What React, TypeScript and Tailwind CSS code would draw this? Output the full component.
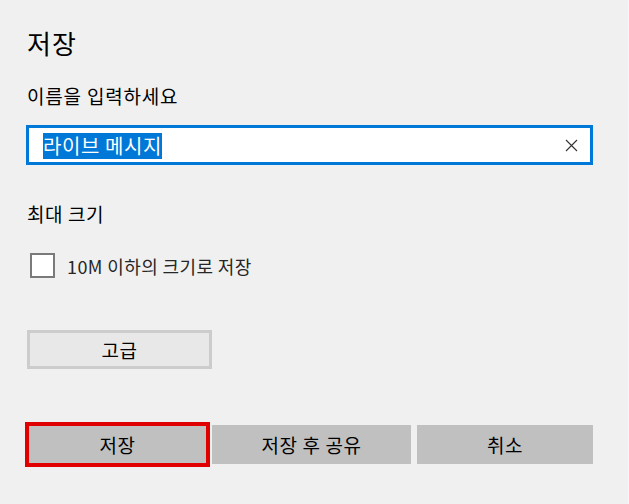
import React from 'react'

const font = { fontFamily: '"Noto Sans CJK KR", "Noto Sans", sans-serif' }

export default function App() {
  return (
    <div
      className="w-[629px] h-[504px] bg-[#f0f0f0] flex overflow-hidden text-black"
      style={font}
    >
      <div className="flex-1 flex flex-col pl-[27px] pr-[35px] pt-[28px]">
        {/* Title */}
        <h1 className="text-[26px] leading-[30px] tracking-[1px] font-normal">저장</h1>

        {/* Name field */}
        <p className="mt-[26px] text-[19px] leading-[24px] tracking-[0.8px]">이름을 입력하세요</p>
        <div className="mt-[17px] -ml-[1px] h-[40px] border-[3px] border-[#0078d7] bg-white flex items-center pl-[14px] pr-[12px]">
          <span className="bg-[#0078d7] text-white text-[20px] leading-[26px] tracking-[0.6px] mt-[1px]">라이브 메시지</span>
          <div className="flex-1" />
          <svg width="13" height="13" viewBox="0 0 13 13" className="mt-[1px]">
            <path d="M1 1L12 12M12 1L1 12" stroke="#333" strokeWidth="1.1" fill="none" />
          </svg>
        </div>

        {/* Max size */}
        <p className="mt-[37px] text-[19px] leading-[24px] tracking-[0.6px]">최대 크기</p>
        <label className="mt-[27px] ml-[3px] flex items-center gap-[12px] h-[25px]">
          <span className="w-[25px] h-[25px] border-2 border-[#7a7a7a] bg-white" />
          <span className="text-[18px] leading-[24px] tracking-[0.4px] text-[#262626]">10M 이하의 크기로 저장</span>
        </label>

        {/* Advanced */}
        <button className="mt-[52px] w-[185px] h-[39px] border-[3px] border-[#cccccc] bg-[#e8e8e8] text-[19px] leading-[24px] tracking-[0.6px]">
          고급
        </button>

        {/* Actions */}
        <div className="mt-[53px] -ml-[2px] flex items-center h-[45px]">
          <button className="w-[185px] h-[45px] border-4 border-[#e00000] bg-[#c0c0c0] text-[19px] leading-[24px] tracking-[0.6px]">
            저장
          </button>
          <button className="ml-[2px] w-[199px] h-[39px] bg-[#c0c0c0] text-[19px] leading-[24px] tracking-[0.6px]">
            저장 후 공유
          </button>
          <button className="ml-[6px] w-[176px] h-[39px] bg-[#c0c0c0] text-[19px] leading-[24px] tracking-[0.6px]">
            취소
          </button>
        </div>
      </div>
      <div className="w-[6px] border-l border-[#f8f6fb] bg-[#f1f0f3]" />
    </div>
  )
}
